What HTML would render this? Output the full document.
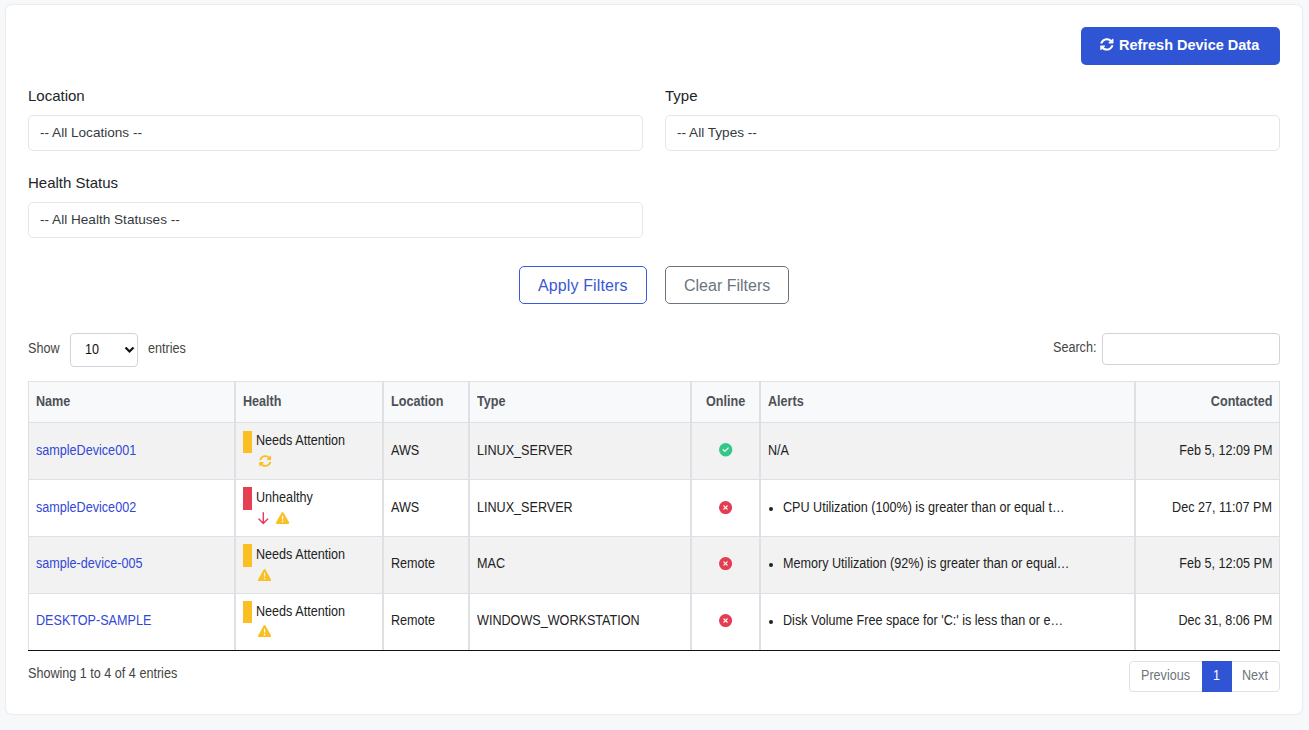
<!DOCTYPE html>
<html><head><meta charset="utf-8">
<style>
*{box-sizing:border-box;margin:0;padding:0}
html,body{width:1309px;height:730px;overflow:hidden;background:#f7f8fa;font-family:"Liberation Sans",sans-serif;}
.a{position:absolute}
.card{left:6px;top:5px;width:1296px;height:709px;background:#fff;border-radius:6px;box-shadow:0 0 1px 1px rgba(20,30,60,.06);}
.t{position:absolute;white-space:nowrap;font-size:14px;line-height:14px;color:#222;transform:scaleX(.9);transform-origin:0 0}
.tr{transform-origin:100% 0;text-align:right}
.h{font-weight:bold;color:#4d5157}
.n{position:absolute;white-space:nowrap;color:#212529}
.sel{position:absolute;border:1px solid #e3e7ec;border-radius:5px;background:#fff}
.ln{position:absolute;background:#dde1e6}
a{color:#3348d6;text-decoration:none}
.bar{position:absolute;width:9px;height:22px}
</style></head><body>
<div class="a card"></div>

<!-- refresh button -->
<div class="a" style="left:1081px;top:27px;width:199px;height:38px;background:#3055d4;border-radius:5px"></div>
<svg class="a" style="left:1100.2px;top:38.2px" width="13.7" height="12.8" viewBox="0 0 512 512" preserveAspectRatio="none"><path fill="#fff" d="M370.72 133.28C339.458 104.008 298.888 87.962 255.848 88c-77.458.068-144.328 53.178-162.791 126.85-1.344 5.363-6.122 9.15-11.651 9.15H24.103c-7.498 0-13.194-6.807-11.807-14.176C33.933 94.924 134.813 8 256 8c66.448 0 126.791 26.136 171.315 68.685L463.03 40.97C478.149 25.851 504 36.559 504 57.941V192c0 13.255-10.745 24-24 24H345.941c-21.382 0-32.09-25.851-16.971-40.971l41.75-41.749zM32 296h134.059c21.382 0 32.090 25.851 16.971 40.971l-41.75 41.75c31.262 29.273 71.835 45.319 114.876 45.28 77.418-.07 144.315-53.144 162.787-126.849 1.344-5.363 6.122-9.15 11.651-9.15h57.304c7.498 0 13.194 6.807 11.807 14.176C478.067 417.076 377.187 504 256 504c-66.448 0-126.791-26.136-171.315-68.685L48.97 471.03C33.851 486.149 8 475.441 8 454.059V320c0-13.255 10.745-24 24-24z"/></svg>
<div class="n" style="left:1119px;top:38px;font-size:14.5px;line-height:15px;font-weight:bold;color:#fff">Refresh Device Data</div>

<!-- filters -->
<div class="n" style="left:28px;top:88px;font-size:15px;line-height:15px">Location</div>
<div class="sel" style="left:28px;top:115px;width:615px;height:36px"></div>
<div class="n" style="left:40px;top:126px;font-size:13.6px;line-height:13px;color:#343a40">-- All Locations --</div>
<div class="n" style="left:665px;top:88px;font-size:15px;line-height:15px">Type</div>
<div class="sel" style="left:665px;top:115px;width:615px;height:36px"></div>
<div class="n" style="left:677px;top:126px;font-size:13.6px;line-height:13px;color:#343a40">-- All Types --</div>
<div class="n" style="left:28px;top:175px;font-size:15px;line-height:15px">Health Status</div>
<div class="sel" style="left:28px;top:202px;width:615px;height:36px"></div>
<div class="n" style="left:40px;top:213px;font-size:13.6px;line-height:13px;color:#343a40">-- All Health Statuses --</div>

<div class="a" style="left:519px;top:266px;width:128px;height:38px;border:1px solid #3b5bdb;border-radius:5px"></div>
<div class="n" style="left:538px;top:278px;font-size:16px;line-height:16px;letter-spacing:.12px;color:#3b57d4">Apply Filters</div>
<div class="a" style="left:665px;top:266px;width:124px;height:38px;border:1px solid #6c757d;border-radius:5px"></div>
<div class="n" style="left:684px;top:278px;font-size:16px;line-height:16px;color:#6c757d">Clear Filters</div>

<!-- datatable controls -->
<div class="t" style="left:28px;top:341px;color:#444">Show</div>
<div class="a" style="left:70px;top:333px;width:68px;height:34px;border:1px solid #cfd4da;border-radius:4px;background:#fff"></div>
<div class="t" style="left:85px;top:342px;color:#111">10</div>
<svg class="a" style="left:123.6px;top:346.2px" width="11" height="8" viewBox="0 0 11 8"><path d="M1.5 1.5 L5.5 5.5 L9.5 1.5" fill="none" stroke="#111" stroke-width="2.2"/></svg>
<div class="t" style="left:148px;top:341px;color:#444">entries</div>
<div class="t" style="left:1053px;top:340px;color:#444">Search:</div>
<div class="a" style="left:1102px;top:333px;width:178px;height:32px;border:1px solid #cfd4da;border-radius:4px;background:#fff"></div>

<!-- table backgrounds -->
<div class="a" style="left:28px;top:381px;width:1252px;height:42px;background:#f8f9fa"></div>
<div class="a" style="left:28px;top:422px;width:1252px;height:57px;background:#f2f2f2"></div>
<div class="a" style="left:28px;top:536px;width:1252px;height:57px;background:#f2f2f2"></div>
<!-- horizontal lines -->
<div class="ln" style="left:28px;top:381px;width:1252px;height:1px"></div>
<div class="ln" style="left:28px;top:422px;width:1252px;height:1px"></div>
<div class="ln" style="left:28px;top:479px;width:1252px;height:1px"></div>
<div class="ln" style="left:28px;top:536px;width:1252px;height:1px"></div>
<div class="ln" style="left:28px;top:593px;width:1252px;height:1px"></div>
<div class="a" style="left:28px;top:650px;width:1252px;height:1px;background:#111"></div>
<!-- vertical lines -->
<div class="ln" style="left:28px;top:381px;width:1px;height:269px"></div>
<div class="ln" style="left:234px;top:381px;width:2px;height:269px"></div>
<div class="ln" style="left:382px;top:381px;width:2px;height:269px"></div>
<div class="ln" style="left:468px;top:381px;width:2px;height:269px"></div>
<div class="ln" style="left:690px;top:381px;width:2px;height:269px"></div>
<div class="ln" style="left:759px;top:381px;width:2px;height:269px"></div>
<div class="ln" style="left:1134px;top:381px;width:2px;height:269px"></div>
<div class="ln" style="left:1279px;top:381px;width:1px;height:269px"></div>

<!-- header -->
<div class="t h" style="left:36px;top:394px">Name</div>
<div class="t h" style="left:243px;top:394px">Health</div>
<div class="t h" style="left:391px;top:394px">Location</div>
<div class="t h" style="left:477px;top:394px">Type</div>
<div class="t h" style="left:706px;top:394px">Online</div>
<div class="t h" style="left:768px;top:394px">Alerts</div>
<div class="t h tr" style="right:37px;top:394px">Contacted</div>

<!-- row 1 -->
<div class="t" style="left:36px;top:443px"><a>sampleDevice001</a></div>
<div class="bar" style="left:243px;top:431px;background:#fbbf24"></div>
<div class="t" style="left:256.4px;top:433px">Needs Attention</div>
<svg class="a" style="left:258.5px;top:455px" width="12.6" height="12" viewBox="0 0 512 512" preserveAspectRatio="none"><path fill="#fbbf24" d="M370.72 133.28C339.458 104.008 298.888 87.962 255.848 88c-77.458.068-144.328 53.178-162.791 126.85-1.344 5.363-6.122 9.15-11.651 9.15H24.103c-7.498 0-13.194-6.807-11.807-14.176C33.933 94.924 134.813 8 256 8c66.448 0 126.791 26.136 171.315 68.685L463.03 40.970C478.149 25.851 504 36.559 504 57.941V192c0 13.255-10.745 24-24 24H345.941c-21.382 0-32.09-25.851-16.971-40.971l41.75-41.749zM32 296h134.059c21.382 0 32.09 25.851 16.971 40.971l-41.75 41.75c31.262 29.273 71.835 45.319 114.876 45.28 77.418-.07 144.315-53.144 162.787-126.849 1.344-5.363 6.122-9.15 11.651-9.15h57.304c7.498 0 13.194 6.807 11.807 14.176C478.067 417.076 377.187 504 256 504c-66.448 0-126.791-26.136-171.315-68.685L48.97 471.03C33.851 486.149 8 475.441 8 454.059V320c0-13.255 10.745-24 24-24z"/></svg>
<div class="t" style="left:391px;top:443px">AWS</div>
<div class="t" style="left:477px;top:443px">LINUX_SERVER</div>
<svg class="a" style="left:719.2px;top:443.3px" width="13.4" height="13.4" viewBox="0 0 512 512"><path fill="#33c88a" d="M256 512A256 256 0 1 0 256 0a256 256 0 1 0 0 512zM369 209L241 337c-9.4 9.4-24.6 9.4-33.9 0l-64-64c-9.4-9.4-9.4-24.6 0-33.9s24.6-9.4 33.9 0l47 47L335 175c9.4-9.4 24.6-9.4 33.9 0s9.4 24.6 0 33.9z"/></svg>
<div class="t" style="left:768px;top:443px">N/A</div>
<div class="t tr" style="right:36.6px;top:443px">Feb 5, 12:09 PM</div>

<!-- row 2 -->
<div class="t" style="left:36px;top:500px"><a>sampleDevice002</a></div>
<div class="bar" style="left:243px;top:487px;height:23px;background:#e43f52"></div>
<div class="t" style="left:256.4px;top:490px">Unhealthy</div>
<svg class="a" style="left:257px;top:511px" width="12" height="14" viewBox="0 0 12 14"><path d="M6.3 1.6V12.3M1.9 7.9 L6.3 12.4 L10.7 7.9" fill="none" stroke="#e23e62" stroke-width="1.45" stroke-linecap="round" stroke-linejoin="round"/></svg>
<svg class="a" style="left:276.35px;top:512.3px" width="13.2" height="11.9" viewBox="0 32 512 448" preserveAspectRatio="none"><path fill="#fbbf24" d="M256 32c14.2 0 27.3 7.5 34.5 19.8l216 368c7.3 12.4 7.3 27.7 .2 40.1S486.3 480 472 480H40c-14.3 0-27.600-7.7-34.7-20.1s-7-27.8 .2-40.1l216-368C228.7 39.5 241.8 32 256 32zm0 128c-13.3 0-24 10.7-24 24V296c0 13.3 10.7 24 24 24s24-10.7 24-24V184c0-13.3-10.7-24-24-24zm32 224a32 32 0 1 0 -64 0 32 32 0 1 0 64 0z"/></svg>
<div class="t" style="left:391px;top:500px">AWS</div>
<div class="t" style="left:477px;top:500px">LINUX_SERVER</div>
<svg class="a" style="left:719.3px;top:500.6px" width="13.1" height="13.1" viewBox="0 0 512 512"><path fill="#e43c50" d="M256 512A256 256 0 1 0 256 0a256 256 0 1 0 0 512zM175 175c9.4-9.4 24.6-9.4 33.9 0l47 47 47-47c9.4-9.4 24.6-9.4 33.9 0s9.4 24.6 0 33.9l-47 47 47 47c9.4 9.4 9.4 24.6 0 33.9s-24.6 9.4-33.9 0l-47-47-47 47c-9.4 9.4-24.6 9.4-33.9 0s-9.4-24.6 0-33.9l47-47-47-47c-9.4-9.4-9.4-24.6 0-33.9z"/></svg>
<div class="a" style="left:769px;top:507px;width:4.2px;height:4.2px;border-radius:50%;background:#222"></div>
<div class="t" style="left:783px;top:500px">CPU Utilization (100%) is greater than or equal t…</div>
<div class="t tr" style="right:36.6px;top:500px">Dec 27, 11:07 PM</div>

<!-- row 3 -->
<div class="t" style="left:36px;top:556px"><a>sample-device-005</a></div>
<div class="bar" style="left:243px;top:544px;height:23px;background:#fbbf24"></div>
<div class="t" style="left:256.4px;top:547px">Needs Attention</div>
<svg class="a" style="left:258.2px;top:569px" width="13.2" height="12.2" viewBox="0 32 512 448" preserveAspectRatio="none"><path fill="#fbbf24" d="M256 32c14.2 0 27.3 7.5 34.5 19.8l216 368c7.3 12.4 7.3 27.7 .2 40.1S486.3 480 472 480H40c-14.3 0-27.600-7.7-34.7-20.1s-7-27.8 .2-40.1l216-368C228.7 39.5 241.8 32 256 32zm0 128c-13.3 0-24 10.7-24 24V296c0 13.3 10.7 24 24 24s24-10.7 24-24V184c0-13.3-10.7-24-24-24zm32 224a32 32 0 1 0 -64 0 32 32 0 1 0 64 0z"/></svg>
<div class="t" style="left:391px;top:556px">Remote</div>
<div class="t" style="left:477px;top:556px">MAC</div>
<svg class="a" style="left:719.3px;top:556.6px" width="13.1" height="13.1" viewBox="0 0 512 512"><path fill="#e43c50" d="M256 512A256 256 0 1 0 256 0a256 256 0 1 0 0 512zM175 175c9.4-9.4 24.6-9.4 33.9 0l47 47 47-47c9.4-9.4 24.6-9.4 33.9 0s9.4 24.6 0 33.9l-47 47 47 47c9.4 9.4 9.4 24.6 0 33.9s-24.6 9.4-33.9 0l-47-47-47 47c-9.4 9.4-24.6 9.4-33.9 0s-9.4-24.6 0-33.9l47-47-47-47c-9.4-9.4-9.4-24.6 0-33.9z"/></svg>
<div class="a" style="left:769px;top:563px;width:4.2px;height:4.2px;border-radius:50%;background:#222"></div>
<div class="t" style="left:783px;top:556px">Memory Utilization (92%) is greater than or equal…</div>
<div class="t tr" style="right:36.6px;top:556px">Feb 5, 12:05 PM</div>

<!-- row 4 -->
<div class="t" style="left:36px;top:613px"><a>DESKTOP-SAMPLE</a></div>
<div class="bar" style="left:243px;top:601px;background:#fbbf24"></div>
<div class="t" style="left:256.4px;top:604px">Needs Attention</div>
<svg class="a" style="left:258.2px;top:625px" width="13.2" height="12.2" viewBox="0 32 512 448" preserveAspectRatio="none"><path fill="#fbbf24" d="M256 32c14.2 0 27.3 7.5 34.5 19.8l216 368c7.3 12.4 7.3 27.7 .2 40.1S486.3 480 472 480H40c-14.3 0-27.600-7.7-34.7-20.1s-7-27.8 .2-40.1l216-368C228.7 39.5 241.8 32 256 32zm0 128c-13.3 0-24 10.7-24 24V296c0 13.3 10.7 24 24 24s24-10.7 24-24V184c0-13.3-10.7-24-24-24zm32 224a32 32 0 1 0 -64 0 32 32 0 1 0 64 0z"/></svg>
<div class="t" style="left:391px;top:613px">Remote</div>
<div class="t" style="left:477px;top:613px">WINDOWS_WORKSTATION</div>
<svg class="a" style="left:719.3px;top:613.6px" width="13.1" height="13.1" viewBox="0 0 512 512"><path fill="#e43c50" d="M256 512A256 256 0 1 0 256 0a256 256 0 1 0 0 512zM175 175c9.4-9.4 24.6-9.4 33.9 0l47 47 47-47c9.4-9.4 24.6-9.4 33.9 0s9.4 24.6 0 33.9l-47 47 47 47c9.4 9.4 9.4 24.6 0 33.9s-24.6 9.4-33.9 0l-47-47-47 47c-9.4 9.4-24.6 9.4-33.9 0s-9.4-24.6 0-33.9l47-47-47-47c-9.4-9.4-9.4-24.6 0-33.9z"/></svg>
<div class="a" style="left:769px;top:620px;width:4.2px;height:4.2px;border-radius:50%;background:#222"></div>
<div class="t" style="left:783px;top:613px">Disk Volume Free space for 'C:' is less than or e…</div>
<div class="t tr" style="right:36.6px;top:613px">Dec 31, 8:06 PM</div>

<!-- footer -->
<div class="t" style="left:28px;top:666px;color:#444">Showing 1 to 4 of 4 entries</div>
<div class="a" style="left:1129px;top:661px;width:151px;height:31px;border:1px solid #dee2e6;border-radius:4px;background:#fff"></div>
<div class="a" style="left:1202px;top:661px;width:30px;height:31px;background:#3055d4"></div>
<div class="t" style="left:1141px;top:668px;color:#6c757d">Previous</div>
<div class="t" style="left:1213px;top:668px;color:#fff">1</div>
<div class="t" style="left:1242px;top:668px;color:#6c757d">Next</div>
</body></html>
